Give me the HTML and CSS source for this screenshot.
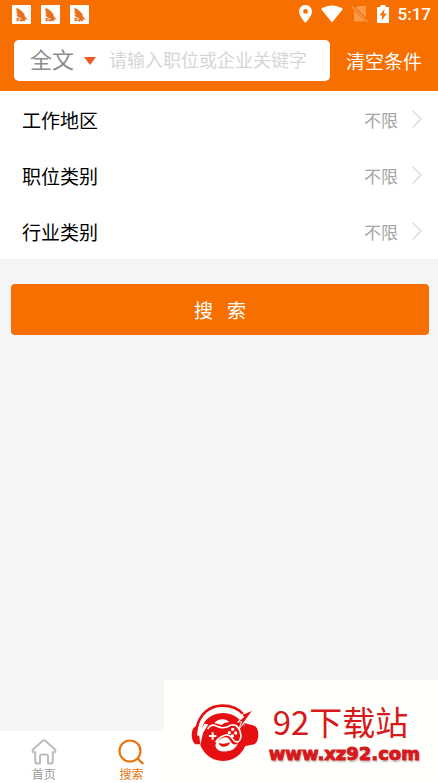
FILE: index.html
```
<!DOCTYPE html>
<html lang="zh-CN">
<head>
<meta charset="utf-8" />
<meta name="viewport" content="width=device-width, initial-scale=1">
<title>搜索</title>
<link rel="stylesheet" href="styles.css">
</head>

<body>

<svg class="defs" width="0" height="0" aria-hidden="true">
  <symbol id="eagle" viewBox="0 0 20 20">
    <rect width="20" height="20" rx="1" fill="#fff"/>
    <path d="M4 2.500 Q10 5 13 9.500 L13.500 12 L16.800 15.500 L13.500 15 L14 17 L11 16.500 L9.500 17.500 L8 16.500 L4 17 L5.500 15.500 L3.500 14.500 L8 13.500 L5.500 12 L4.500 9.800 L6.500 10 L3.800 7 L6 7.500 L3.500 4.800 L5.500 5.200 Z" fill="#e8701c"/>
    <path d="M7.500 13.800 L10 14.500 M6.500 15.500 L9 15.500" stroke="#fff" stroke-width=".8" fill="none"/>
  </symbol>
  <symbol id="chevron" viewBox="0 0 12 20">
    <path d="M1.500 1.500 L10 10 L1.500 18.500" fill="none" stroke="#d9d9d9" stroke-width="1.300"/>
  </symbol>
</svg>

<header class="header">
  <div class="status">
    <div class="notices">
      <svg width="19" height="19"><use href="#eagle"/></svg>
      <svg width="19" height="19"><use href="#eagle"/></svg>
      <svg width="19" height="19"><use href="#eagle"/></svg>
    </div>
    <div class="signals">
      <svg width="13" height="18" viewBox="0 0 13 18"><path fill="#fff" fill-rule="evenodd" d="M6.500 0 C2.900 0 0 2.900 0 6.500 C0 11 6.500 18 6.500 18 S13 11 13 6.500 C13 2.900 10.100 0 6.500 0 Z M6.500 4 a2.400 2.400 0 1 1 0 4.800 a2.400 2.400 0 1 1 0 -4.800 Z"/></svg>
      <svg width="22" height="18" viewBox="0 0 22 18"><path fill="#fff" d="M0 4 C6.500 -.8 15.500 -.8 22 4 L11 17.500 Z"/></svg>
      <svg width="16" height="18" viewBox="0 0 16 18"><path fill="#fa9a4d" d="M6 1 H14 V12.500 L4 3 Z M2 5.500 L13 16.500 H2 Z"/><path stroke="#fa9a4d" stroke-width="1.500" d="M0 1.500 L15.500 17"/></svg>
      <svg width="12" height="18" viewBox="0 0 12 18"><path fill="#fff" d="M3.500 0 H8.500 V2 H12 V18 H0 V2 H3.500 Z"/><path fill="#f66f00" d="M7.500 4 L2.500 10.500 H5.200 L4.500 15.500 L9.800 8.500 H6.800 Z"/></svg>
      <span class="time">5:17</span>
    </div>
  </div>
  <form class="searchbar" id="search">
    <div class="searchbox">
      <select class="scope" aria-label="搜索范围">
        <option>全文</option>
        <option>职位</option>
        <option>企业</option>
      </select>
      <svg class="caret" width="12" height="8" viewBox="0 0 12 8"><path fill="#f15a24" d="M0 0 H12 L6 8 Z"/></svg>
      <input class="keyword" type="text" aria-label="关键字" placeholder="请输入职位或企业关键字">
    </div>
    <button class="clear" type="reset">清空条件</button>
  </form>
</header>

<main>
  <div class="filters">
    <button class="filter" type="button">
      <span class="name">工作地区</span>
      <span class="value">不限</span>
      <svg width="12" height="20"><use href="#chevron"/></svg>
    </button>
    <button class="filter" type="button">
      <span class="name">职位类别</span>
      <span class="value">不限</span>
      <svg width="12" height="20"><use href="#chevron"/></svg>
    </button>
    <button class="filter" type="button">
      <span class="name">行业类别</span>
      <span class="value">不限</span>
      <svg width="12" height="20"><use href="#chevron"/></svg>
    </button>
  </div>
  <div class="action">
    <button class="submit" type="submit" form="search">搜&nbsp;&nbsp;&nbsp;索</button>
  </div>
</main>

<nav class="tabs">
  <a class="tab" href="#home">
    <svg width="26" height="26" viewBox="0 0 26 26"><path fill="none" stroke="#bdbdbd" stroke-width="2" stroke-linejoin="round" d="M11.700 1.800 Q13 .8 14.300 1.800 L23.800 10.300 Q25.200 12 23.600 13.300 H21.800 V22.500 Q21.800 24.500 19.800 24.500 H17 V17.500 Q17 15.500 15 15.500 H11 Q9 15.500 9 17.500 V24.500 H6.200 Q4.200 24.500 4.200 22.500 V13.300 H2.400 Q.8 12 2.200 10.300 Z"/></svg>
    首页
  </a>
  <a class="tab active" href="#search">
    <svg width="26" height="26" viewBox="0 0 26 26"><circle cx="12" cy="12" r="10.500" fill="none" stroke="#e8750f" stroke-width="2.200"/><path d="M19 19 L25.300 25" stroke="#e8750f" stroke-width="2.400"/></svg>
    搜索
  </a>
</nav>

<aside class="watermark">
  <svg width="68" height="58" viewBox="6 9 204 174">
    <!-- head and ears -->
    <circle cx="102" cy="108" r="72" fill="#e60f12"/>
    <path fill="#e60f12" d="M166 66 L196 74 Q208 80 208 102 Q207 124 196 130 L166 136 Z"/>
    <path fill="#e60f12" d="M24 74 L40 80 L32 100 L34 130 L18 130 Q8 120 8 100 Q9 78 24 74 Z"/>
    <!-- headset band, white with a red edge, and its bolt -->
    <path fill="none" stroke="#fffffb" stroke-width="12" d="M30 104 C32 54 62 23 103 23 C128 23 148 33 160 48"/>
    <path fill="none" stroke="#e60f12" stroke-width="8" d="M22 84 C32 38 62 14 100 14 C128 14 150 25 163 40"/>
    <path fill="#fffffb" d="M30 98 L34 132 L42 96 L58 70 L46 68 Z"/>
    <path fill="#e60f12" stroke="#fffffb" stroke-width="3" d="M158 41 L192 27 L148 88 L158 62 L146 63 L164 48 Z"/>
    <!-- face -->
    <path fill="#fffffb" d="M76 66 Q86 54 104 55 Q116 56 121 64 Q106 62 98 72 Z"/>
    <path fill="#fffffb" d="M98 112 Q116 102 124 120 Q134 138 147 126 Q140 148 114 151 Q82 154 79 134 Q80 120 98 112 Z"/>
    <!-- game pad -->
    <path fill="#e60f12" stroke="#fffffb" stroke-width="5" d="M56 84 Q66 66 84 76 Q104 86 124 73 Q144 66 153 90 Q160 114 148 122 Q138 126 128 110 Q118 96 100 106 Q86 112 80 124"/>
    <path stroke="#fffffb" stroke-width="6" d="M60 105 H82 M71 94 V116"/>
    <g fill="#fffffb"><circle cx="131" cy="85" r="5"/><circle cx="121" cy="95" r="5"/><circle cx="140" cy="96" r="5"/><circle cx="130" cy="105" r="5"/></g>
    <path fill="#e60f12" d="M88 125 Q103 132 124 124 Q118 138 104 137 Q92 136 88 125 Z"/>
  </svg>
  <div class="brand">
    <strong class="brandname">92下载站</strong>
    <span class="brandurl">www.xz92.com</span>
  </div>
</aside>

</body>
</html>
```
FILE: styles.css
```
* {
  box-sizing: border-box;
}

body {
  margin: 0;
  min-height: 100vh;
  display: flex;
  flex-direction: column;
  background: #f5f5f5;
  font-family: Roboto, "Noto Sans CJK SC", sans-serif;
}

button, input, select {
  margin: 0;
  padding: 0;
  border: 0;
  background: none;
  font-family: inherit;
}

button {
  cursor: pointer;
}

svg {
  display: block;
  flex: none;
}

.defs {
  position: absolute;
}

/* header */
.header {
  background: #f66f00;
  padding-bottom: 10px;
}

.status {
  display: flex;
  justify-content: space-between;
  align-items: center;
  height: 40px;
  padding: 0 7px 12px 12px;
}

.notices {
  display: flex;
  gap: 10px;
}

.signals {
  display: flex;
  align-items: center;
  gap: 9px;
}

.time {
  color: #fff;
  font-size: 17px;
  font-weight: 500;
  line-height: 20px;
}

.searchbar {
  display: flex;
  align-items: center;
  gap: 16px;
  padding: 0 16px 0 14px;
}

.searchbox {
  flex: 1;
  min-width: 0;
  display: flex;
  align-items: center;
  height: 41px;
  padding-left: 16px;
  background: #fff;
  border-radius: 5px;
}

.scope {
  appearance: none;
  width: 54px;
  color: #8c8c8c;
  font-size: 22px;
}

.caret {
  margin-right: 13px;
}

.keyword {
  flex: 1;
  min-width: 0;
  height: 40px;
  font-size: 18px;
  color: #333;
  outline: none;
}

.keyword::placeholder {
  color: #d6d6d6;
}

.clear {
  color: #fff;
  font-size: 19px;
}

/* filter rows */
.filters {
  background: #fff;
}

.filter {
  display: flex;
  align-items: center;
  width: 100%;
  height: 56px;
  padding: 0 15px 0 22px;
}

.name {
  flex: 1;
  text-align: left;
  color: #000;
  font-size: 19px;
}

.value {
  margin-right: 13px;
  color: #a6a6a6;
  font-size: 17px;
}

.action {
  padding: 25px 9px 25px 11px;
}

.submit {
  width: 100%;
  height: 51px;
  background: #f66f00;
  border-radius: 4px;
  color: #fff;
  font-size: 19px;
}

/* bottom tabs */
.tabs {
  display: grid;
  grid-template-columns: repeat(5, 1fr);
  margin-top: auto;
  background: #fff;
}

.tab {
  display: flex;
  flex-direction: column;
  align-items: center;
  gap: 2px;
  padding: 8px 0 0;
  color: #999;
  font-size: 12px;
  line-height: 16px;
  text-decoration: none;
}

.tab.active {
  color: #e8750f;
}

/* site mark over the bottom corner */
.watermark {
  position: absolute;
  right: 0;
  bottom: 0;
  display: flex;
  align-items: center;
  gap: 10px;
  height: 103px;
  padding: 3px 18px 0 27px;
  background: #fffffb;
}

.brand {
  display: flex;
  flex-direction: column;
}

.brandname {
  padding-left: 4px;
  color: #d6191c;
  font-family: "Noto Sans CJK SC", sans-serif;
  font-size: 33px;
  font-weight: 400;
  line-height: 42px;
}

.brandurl {
  color: #d6191c;
  font-family: "DejaVu Sans", sans-serif;
  font-size: 18px;
  font-weight: 700;
  line-height: 24px;
  -webkit-text-stroke: 1px #d6191c;
  text-shadow: 1px 2px 2px #bbb;
}
```
